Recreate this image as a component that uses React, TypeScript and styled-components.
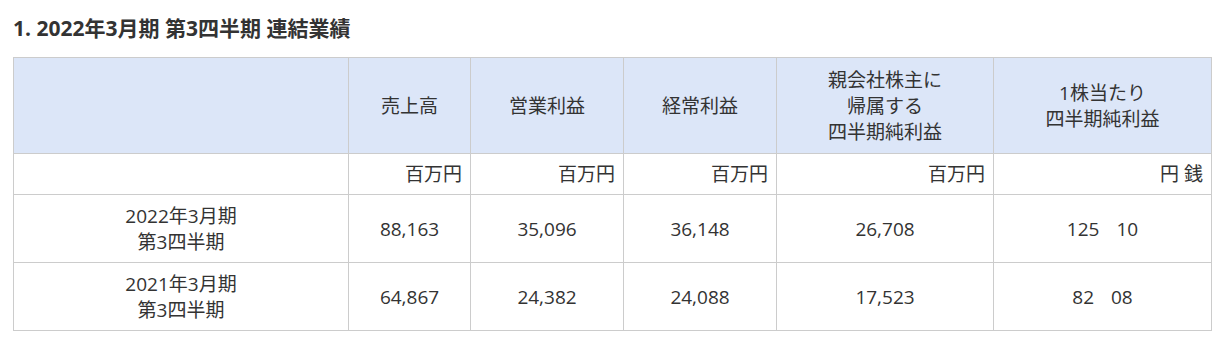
import React from 'react';
import styled, { createGlobalStyle } from 'styled-components';

const GlobalStyle = createGlobalStyle`
  body {
    margin: 0;
    background: #fff;
    font-family: "Open Sans", "Noto Sans CJK JP", sans-serif;
    color: #333;
  }
`;

const Wrapper = styled.div`
  padding: 14px 11px 0 13px;
`;

const Title = styled.h3`
  margin: 0 0 15px;
  font-size: 21px;
  font-weight: 700;
  line-height: 28px;
  color: #333;
`;

const Table = styled.table`
  width: 100%;
  border-collapse: collapse;
  table-layout: fixed;
  font-size: 19px;
  line-height: 26px;
  color: #333;
`;

const Th = styled.th`
  background: #dce6f8;
  border: 1px solid #ccc;
  font-weight: 400;
  text-align: center;
  vertical-align: middle;
  padding: 9px 6px 8px;
  height: 78px;
`;

const UnitCell = styled.td`
  border: 1px solid #ccc;
  text-align: right;
  padding: 7px 8px;
`;

const Td = styled.td`
  border: 1px solid #ccc;
  text-align: center;
  vertical-align: middle;
  padding: 8px 6px 7px;
`;

const Yen = styled.span<{ $gap?: boolean }>`
  margin-left: ${(p) => (p.$gap ? '17px' : '0')};
`;

const widths = [335, 122, 153, 153, 217, 218];

const rows = [
  { period: ['2022年3月期', '第3四半期'], vals: ['88,163', '35,096', '36,148', '26,708'], eps: ['125', '10'] },
  { period: ['2021年3月期', '第3四半期'], vals: ['64,867', '24,382', '24,088', '17,523'], eps: ['82', '08'] },
];

export default function App() {
  return (
    <>
      <GlobalStyle />
      <Wrapper>
        <Title>1. 2022年3月期 第3四半期 連結業績</Title>
        <Table>
          <colgroup>
            {widths.map((w, i) => (
              <col key={i} style={{ width: w }} />
            ))}
          </colgroup>
          <thead>
            <tr>
              <Th></Th>
              <Th>売上高</Th>
              <Th>営業利益</Th>
              <Th>経常利益</Th>
              <Th>
                親会社株主に
                <br />
                帰属する
                <br />
                四半期純利益
              </Th>
              <Th>
                1株当たり
                <br />
                四半期純利益
              </Th>
            </tr>
          </thead>
          <tbody>
            <tr>
              <UnitCell></UnitCell>
              <UnitCell>百万円</UnitCell>
              <UnitCell>百万円</UnitCell>
              <UnitCell>百万円</UnitCell>
              <UnitCell>百万円</UnitCell>
              <UnitCell>円 銭</UnitCell>
            </tr>
            {rows.map((r, i) => (
              <tr key={i}>
                <Td>
                  {r.period[0]}
                  <br />
                  {r.period[1]}
                </Td>
                {r.vals.map((v, j) => (
                  <Td key={j}>{v}</Td>
                ))}
                <Td>
                  <Yen>{r.eps[0]}</Yen>
                  <Yen $gap>{r.eps[1]}</Yen>
                </Td>
              </tr>
            ))}
          </tbody>
        </Table>
      </Wrapper>
    </>
  );
}
